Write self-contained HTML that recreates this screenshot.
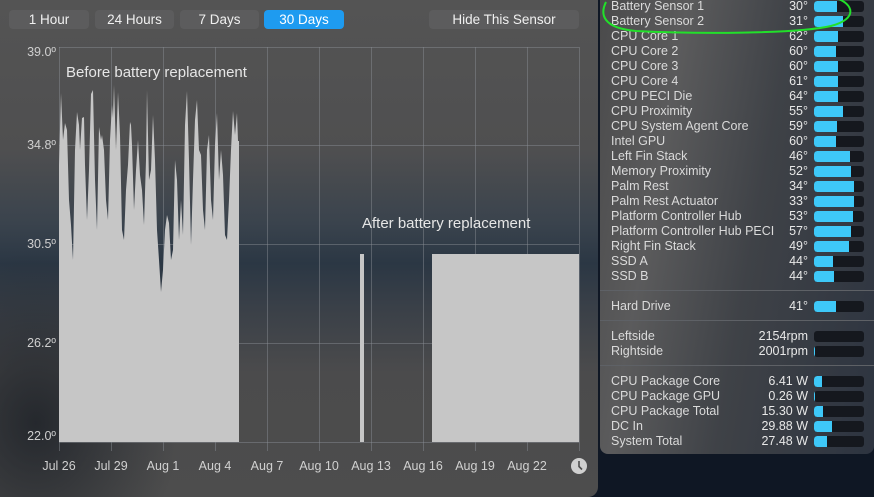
<!DOCTYPE html>
<html><head><meta charset="utf-8"><style>
*{margin:0;padding:0;box-sizing:border-box}
body{width:874px;height:497px;overflow:hidden;background:#0f1724;font-family:"Liberation Sans",sans-serif;position:relative}
#left{position:absolute;left:0;top:0;width:598px;height:497px;border-radius:0 0 10px 0;overflow:hidden;
background:linear-gradient(180deg,#545454 0%,#4f4f50 30%,#3a434d 45%,#2b3744 53%,#3a4048 62%,#4b4b4c 75%,#4d4d4d 100%)}
#left:before{content:"";position:absolute;left:0;top:250px;width:180px;height:247px;background:radial-gradient(ellipse at 20% 70%,rgba(30,34,40,.85),rgba(30,34,40,0) 70%)}
.btn{position:absolute;top:10px;height:19px;border-radius:4px;background:#5c5c5d;color:#f0f0f0;font-size:13.5px;line-height:19px;text-align:center}
.btn.on{background:#1e9bf0;color:#fff}
.yl{position:absolute;left:20px;width:36px;text-align:right;color:#cfcfcf;font-size:12.5px}
.xl{position:absolute;top:459px;color:#d0d0d0;font-size:12.5px;width:60px;text-align:center}
#right{position:absolute;left:600px;top:0;width:274px;height:454px;border-radius:0 0 8px 8px;
background:linear-gradient(100deg,#4a4a4b 0%,#5b5b5c 25%,#3f4247 55%,#2d3440 100%)}
.r{position:absolute;left:11px;width:253px;height:15px;font-size:12.5px;color:#dadada;line-height:15px}
.r .v{position:absolute;right:56px;top:0;color:#e8e8e8}
.r .b{position:absolute;left:203px;top:2px;width:50px;height:11px;background:#15181e;border-radius:3px;overflow:hidden}
.r .b i{display:block;height:100%;background:#3ec8f8;border-radius:3px 0 0 3px}
.sep{position:absolute;left:0;width:274px;height:1px;background:#5e6166}
</style></head><body>
<div id="left">
<div class="btn" style="left:9px;width:80px">1 Hour</div>
<div class="btn" style="left:95px;width:79px">24 Hours</div>
<div class="btn" style="left:180px;width:79px">7 Days</div>
<div class="btn on" style="left:264px;width:80px">30 Days</div>
<div class="btn" style="left:429px;width:150px">Hide This Sensor</div>
<svg style="position:absolute;left:0;top:0" width="598" height="497">
<g stroke="rgba(140,145,150,0.45)" stroke-width="1" fill="none">
<path d="M59.5 47V443M111.5 47V443M163.5 47V443M215.5 47V443M267.5 47V443M319.5 47V443M371.5 47V443M423.5 47V443M475.5 47V443M527.5 47V443M579.5 47V443"/>
<path d="M59 47.5H579M59 145.5H579M59 244.5H579M59 343.5H579M59 442.5H579"/>
<path d="M59.5 443v8M111.5 443v8M163.5 443v8M215.5 443v8M267.5 443v8M319.5 443v8M371.5 443v8M423.5 443v8M475.5 443v8M527.5 443v8M579.5 443v8"/>
</g>
<polygon fill="#c6c6c6" points="59,442 59,165 61,93 63,140 65,123 67,130 69,200 71,225 73,260 75,150 77,112 79,125 80,150 82,118 84,117 85,165 87,220 89,170 91,94 93,90 95,180 97,230 99,127 101,140 102,135 104,150 106,200 108,220 110,140 112,105 113,118 114,85 116,150 118,92 120,135 122,230 124,240 126,190 128,165 130,122 131,125 132,145 134,210 136,170 138,140 140,175 142,190 144,225 146,160 147,90 149,180 151,170 153,115 155,160 157,230 159,260 161,292 163,270 165,230 167,215 169,223 171,260 173,250 175,160 177,180 179,240 181,200 183,235 185,125 187,91 189,160 191,245 193,180 195,120 197,100 199,150 201,155 203,210 205,230 207,150 209,135 211,200 213,220 215,145 217,113 219,180 221,150 223,175 225,235 227,240 229,200 231,150 233,111 235,135 237,113 238,141 239,141 239,442"/>
<rect x="360" y="254" width="4" height="188" fill="#c6c6c6"/>
<rect x="432" y="254" width="147" height="188" fill="#c6c6c6"/>
<circle cx="579" cy="466" r="8" fill="#d0d0d0"/>
<path d="M579 461v5.5l3 3" stroke="#4d4d4d" stroke-width="1.6" fill="none"/>
<text x="66" y="77" fill="#e6e6e6" font-size="15" font-family="Liberation Sans">Before battery replacement</text>
<text x="362" y="228" fill="#e6e6e6" font-size="15" font-family="Liberation Sans">After battery replacement</text>
</svg>
<div class="yl" style="top:45px">39.0º</div>
<div class="yl" style="top:138px">34.8º</div>
<div class="yl" style="top:237px">30.5º</div>
<div class="yl" style="top:336px">26.2º</div>
<div class="yl" style="top:429px">22.0º</div>
<div class="xl" style="left:29px">Jul 26</div>
<div class="xl" style="left:81px">Jul 29</div>
<div class="xl" style="left:133px">Aug 1</div>
<div class="xl" style="left:185px">Aug 4</div>
<div class="xl" style="left:237px">Aug 7</div>
<div class="xl" style="left:289px">Aug 10</div>
<div class="xl" style="left:341px">Aug 13</div>
<div class="xl" style="left:393px">Aug 16</div>
<div class="xl" style="left:445px">Aug 19</div>
<div class="xl" style="left:497px">Aug 22</div>
</div>
<div id="right">
<div class="r" style="top:-1px">Battery Sensor 1<span class="v">30°</span><span class="b"><i style="width:23px"></i></span></div>
<div class="r" style="top:14px">Battery Sensor 2<span class="v">31°</span><span class="b"><i style="width:29px"></i></span></div>
<div class="r" style="top:29px">CPU Core 1<span class="v">62°</span><span class="b"><i style="width:24px"></i></span></div>
<div class="r" style="top:44px">CPU Core 2<span class="v">60°</span><span class="b"><i style="width:22px"></i></span></div>
<div class="r" style="top:59px">CPU Core 3<span class="v">60°</span><span class="b"><i style="width:24px"></i></span></div>
<div class="r" style="top:74px">CPU Core 4<span class="v">61°</span><span class="b"><i style="width:24px"></i></span></div>
<div class="r" style="top:89px">CPU PECI Die<span class="v">64°</span><span class="b"><i style="width:24px"></i></span></div>
<div class="r" style="top:104px">CPU Proximity<span class="v">55°</span><span class="b"><i style="width:29px"></i></span></div>
<div class="r" style="top:119px">CPU System Agent Core<span class="v">59°</span><span class="b"><i style="width:23px"></i></span></div>
<div class="r" style="top:134px">Intel GPU<span class="v">60°</span><span class="b"><i style="width:22px"></i></span></div>
<div class="r" style="top:149px">Left Fin Stack<span class="v">46°</span><span class="b"><i style="width:36px"></i></span></div>
<div class="r" style="top:164px">Memory Proximity<span class="v">52°</span><span class="b"><i style="width:37px"></i></span></div>
<div class="r" style="top:179px">Palm Rest<span class="v">34°</span><span class="b"><i style="width:40px"></i></span></div>
<div class="r" style="top:194px">Palm Rest Actuator<span class="v">33°</span><span class="b"><i style="width:40px"></i></span></div>
<div class="r" style="top:209px">Platform Controller Hub<span class="v">53°</span><span class="b"><i style="width:39px"></i></span></div>
<div class="r" style="top:224px">Platform Controller Hub PECI<span class="v">57°</span><span class="b"><i style="width:37px"></i></span></div>
<div class="r" style="top:239px">Right Fin Stack<span class="v">49°</span><span class="b"><i style="width:35px"></i></span></div>
<div class="r" style="top:254px">SSD A<span class="v">44°</span><span class="b"><i style="width:19px"></i></span></div>
<div class="r" style="top:269px">SSD B<span class="v">44°</span><span class="b"><i style="width:20px"></i></span></div>
<div class="sep" style="top:290px"></div>
<div class="r" style="top:299px">Hard Drive<span class="v">41°</span><span class="b"><i style="width:22px"></i></span></div>
<div class="sep" style="top:320px"></div>
<div class="r" style="top:329px">Leftside<span class="v">2154rpm</span><span class="b"><i style="width:0px"></i></span></div>
<div class="r" style="top:344px">Rightside<span class="v">2001rpm</span><span class="b"><i style="width:1px"></i></span></div>
<div class="sep" style="top:365px"></div>
<div class="r" style="top:374px">CPU Package Core<span class="v">6.41 W</span><span class="b"><i style="width:8px"></i></span></div>
<div class="r" style="top:389px">CPU Package GPU<span class="v">0.26 W</span><span class="b"><i style="width:1px"></i></span></div>
<div class="r" style="top:404px">CPU Package Total<span class="v">15.30 W</span><span class="b"><i style="width:9px"></i></span></div>
<div class="r" style="top:419px">DC In<span class="v">29.88 W</span><span class="b"><i style="width:18px"></i></span></div>
<div class="r" style="top:434px">System Total<span class="v">27.48 W</span><span class="b"><i style="width:13px"></i></span></div>
</div>
<svg style="position:absolute;left:596px;top:0" width="270" height="40">
<path d="M10 2 C4 14,6 28,40 31 C100 34,200 34,235 26 C262 19,258 4,240 -2" stroke="#22e02a" stroke-width="2" fill="none"/>
</svg>
</body></html>
